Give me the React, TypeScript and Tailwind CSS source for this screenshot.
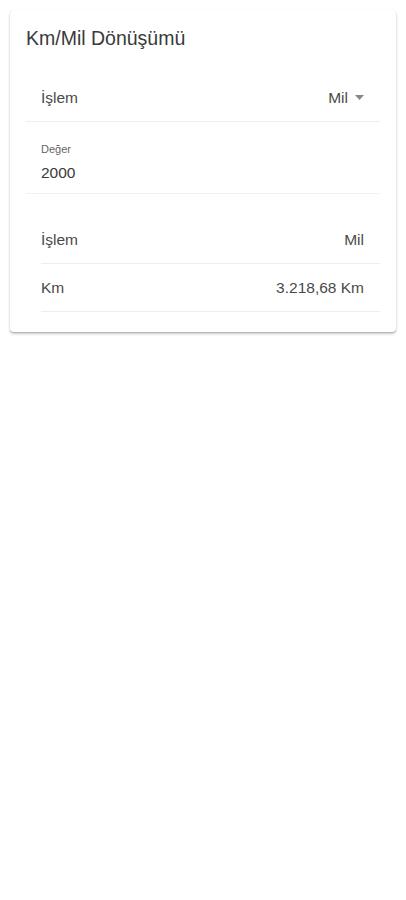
import React from "react";

export default function App() {
  const font = { fontFamily: '"Liberation Sans", Arial, sans-serif' };
  return (
    <div className="min-h-[900px] bg-white pt-[10px] px-[10px]" style={font}>
      <div className="w-[386px] bg-white rounded-[4px] shadow-[0_2px_3px_rgba(0,0,0,0.2),0_1px_1px_rgba(0,0,0,0.14),0_0_1px_rgba(0,0,0,0.12)] pt-4 pb-5">
        <div className="px-4 text-[19.5px] leading-6 text-[#3a3a3a]">Km/Mil Dönüşümü</div>
        <div className="mx-4 mt-[24px]">
          <div className="h-[48px] flex items-center justify-between pl-[15px] pr-[16px] border-b border-[#eeeeee] text-[15.5px] text-[#4a4a4a]">
            <span>İşlem</span>
            <span className="flex items-center gap-[7px]">
              <span>Mil</span>
              <svg width="9" height="5" viewBox="0 0 9 5"><path d="M0 0 L9 0 L4.5 5 Z" fill="#888" /></svg>
            </span>
          </div>
          <div className="pl-[15px] pt-[21px] pb-[10px] border-b border-[#f2f2f2]">
            <div className="text-[11px] leading-[13px] text-[#666]">Değer</div>
            <div className="mt-[7px] text-[15.5px] leading-[20px] text-[#3a3a3a]">2000</div>
          </div>
          <div className="mt-[22px] pl-[15px]">
            <div className="h-[48px] flex items-center justify-between pr-[16px] border-b border-[#eeeeee] text-[15.5px] text-[#4a4a4a]">
              <span>İşlem</span>
              <span>Mil</span>
            </div>
            <div className="h-[48px] flex items-center justify-between pr-[16px] border-b border-[#eeeeee] text-[15.5px] text-[#4a4a4a]">
              <span>Km</span>
              <span>3.218,68 Km</span>
            </div>
          </div>
        </div>
      </div>
    </div>
  );
}
